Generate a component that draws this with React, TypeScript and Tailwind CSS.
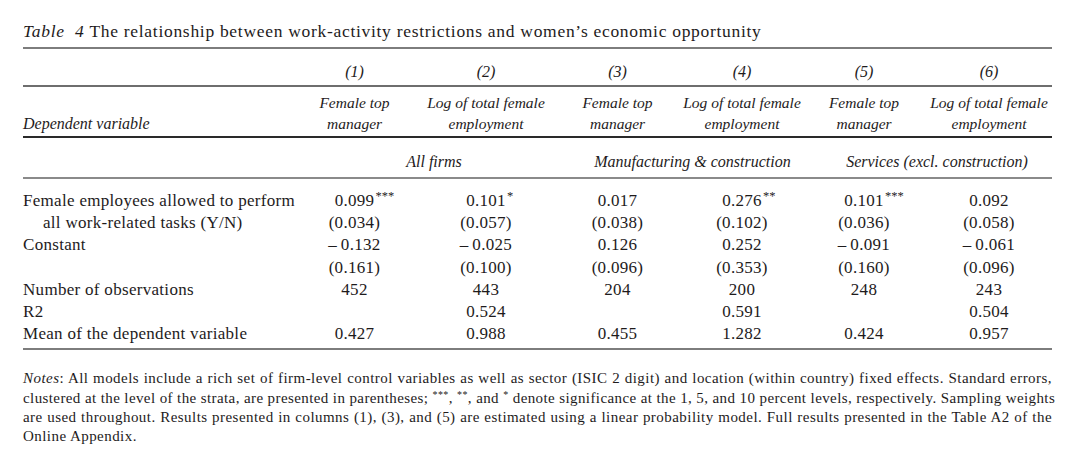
import React from "react";

const GRID = "grid grid-cols-[267px_129px_134px_129px_120px_124px_126px]";

function Cell({ children }: { children?: React.ReactNode }) {
  return (
    <div className="flex justify-center whitespace-nowrap">
      <span className="relative">{children}</span>
    </div>
  );
}

function Num({ v, stars }: { v: string; stars?: string }) {
  return (
    <span className="relative">
      {v}
      {stars ? (
        <span className="absolute left-full top-[-1px] text-[12.5px] leading-none pl-[1px] tracking-normal">{stars}</span>
      ) : null}
    </span>
  );
}

type Row = { label: React.ReactNode; vals: (string | [string, string] | null)[]; indent?: boolean };

const rows: Row[] = [
  { label: "Female employees allowed to perform", vals: [["0.099", "***"], ["0.101", "*"], "0.017", ["0.276", "**"], ["0.101", "***"], "0.092"] },
  { label: "all work-related tasks (Y/N)", indent: true, vals: ["(0.034)", "(0.057)", "(0.038)", "(0.102)", "(0.036)", "(0.058)"] },
  { label: "Constant", vals: ["\u2013\u20090.132", "\u2013\u20090.025", "0.126", "0.252", "\u2013\u20090.091", "\u2013\u20090.061"] },
  { label: "", vals: ["(0.161)", "(0.100)", "(0.096)", "(0.353)", "(0.160)", "(0.096)"] },
  { label: "Number of observations", vals: ["452", "443", "204", "200", "248", "243"] },
  { label: "R2", vals: [null, "0.524", null, "0.591", null, "0.504"] },
  { label: "Mean of the dependent variable", vals: ["0.427", "0.988", "0.455", "1.282", "0.424", "0.957"] },
];

export default function App() {
  return (
    <div className="w-[1075px] h-[453px] bg-white text-[#1e1b1c] font-['Liberation_Serif',serif] px-[23px] overflow-hidden">
      <div className="pt-[20px] text-[17.5px] tracking-[0.7px] leading-[22px] whitespace-nowrap">
        <span className="italic">Table&nbsp; 4</span>&nbsp;The relationship between work-activity restrictions and women&rsquo;s economic opportunity
      </div>
      <div className="mt-[5px] border-t-[2px] border-[#7d7d7d]" />
      {/* column numbers */}
      <div className={`${GRID} pt-[12px] pb-[2px] text-[16px] leading-[22px] italic border-b-[2px] border-[#6e6e6e]`}>
        <div />
        {["(1)", "(2)", "(3)", "(4)", "(5)", "(6)"].map((t) => (
          <Cell key={t}>{t}</Cell>
        ))}
      </div>
      {/* headers */}
      <div className={`${GRID} pt-[5px] pb-[2px] text-[15.5px] leading-[21px] italic border-b-[2px] border-[#2a2a2a]`}>
        <div className="flex items-end whitespace-nowrap text-[16px]">Dependent variable</div>
        {[0, 1, 2, 3, 4, 5].map((i) => (
          <div key={i} className="flex flex-col items-center whitespace-nowrap">
            {i % 2 === 0 ? (
              <>
                <span>Female top</span>
                <span>manager</span>
              </>
            ) : (
              <>
                <span>Log of total female</span>
                <span>employment</span>
              </>
            )}
          </div>
        ))}
      </div>
      {/* groups */}
      <div className={`${GRID} pt-[13px] pb-[4px] text-[16px] leading-[22px] italic border-b-[2px] border-[#8a8a8a]`}>
        <div />
        <div className="col-span-2 flex justify-center whitespace-nowrap pl-[25px]">All firms</div>
        <div className="col-span-2 flex justify-center whitespace-nowrap pl-[30px]">Manufacturing &amp; construction</div>
        <div className="col-span-2 flex justify-center whitespace-nowrap pl-[20px]">Services (excl. construction)</div>
      </div>
      {/* data */}
      <div className="pt-[11px] pb-[3px] text-[17px] tracking-[0.3px] leading-[22.2px] border-b-[2px] border-[#7d7d7d]">
        {rows.map((r, ri) => (
          <div key={ri} className={`${GRID} h-[22.2px]`}>
            <div className={`whitespace-nowrap ${r.indent ? "pl-[20px]" : ""}`}>{r.label}</div>
            {r.vals.map((v, i) => (
              <Cell key={i}>
                {v === null ? null : Array.isArray(v) ? <Num v={v[0]} stars={v[1]} /> : <Num v={v} />}
              </Cell>
            ))}
          </div>
        ))}
      </div>
      {/* notes */}
      <div className="mt-[19px] text-[15px] tracking-[0.45px] leading-[19.3px]">
        <div className="text-justify [text-align-last:justify] whitespace-nowrap">
          <span className="italic">Notes</span>: All models include a rich set of firm-level control variables as well as sector (ISIC 2 digit) and location (within country) fixed effects. Standard errors,
        </div>
        <div className="text-justify [text-align-last:justify] whitespace-nowrap tracking-[0.4px]">
          clustered at the level of the strata, are presented in parentheses; <sup className="text-[10px]">***</sup>, <sup className="text-[10px]">**</sup>, and <sup className="text-[10px]">*</sup> denote significance at the 1, 5, and 10 percent levels, respectively. Sampling weights
        </div>
        <div className="text-justify [text-align-last:justify] whitespace-nowrap">
          are used throughout. Results presented in columns (1), (3), and (5) are estimated using a linear probability model. Full results presented in the Table A2 of the
        </div>
        <div className="whitespace-nowrap">Online Appendix.</div>
      </div>
    </div>
  );
}
